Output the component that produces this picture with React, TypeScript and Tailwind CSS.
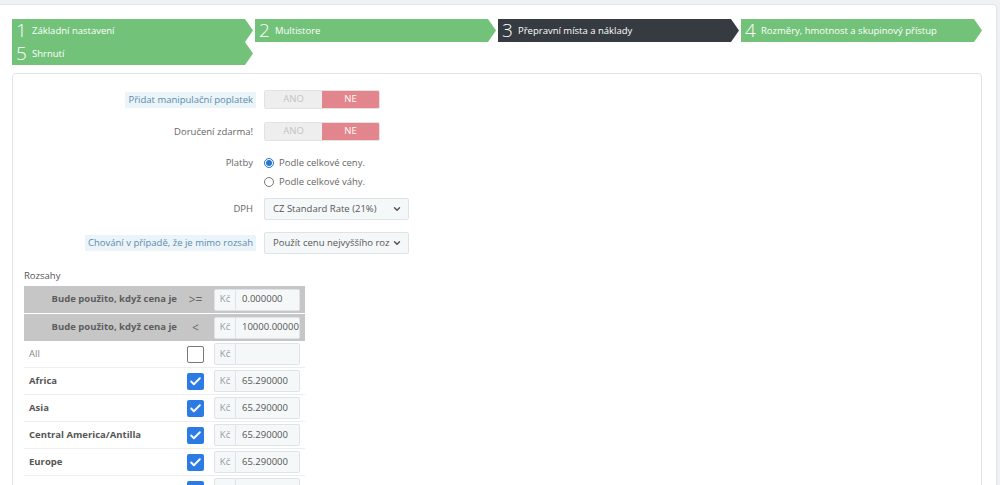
import { Check, ChevronDown } from "lucide-react";

const steps = [
  { n: "1", label: "Základní nastavení", active: false },
  { n: "2", label: "Multistore", active: false },
  { n: "3", label: "Přepravní místa a náklady", active: true },
  { n: "4", label: "Rozměry, hmotnost a skupinový přístup", active: false },
  { n: "5", label: "Shrnutí", active: false },
];

const zones = [
  { name: "All", checked: false, value: "" },
  { name: "Africa", checked: true, value: "65.290000" },
  { name: "Asia", checked: true, value: "65.290000" },
  { name: "Central America/Antilla", checked: true, value: "65.290000" },
  { name: "Europe", checked: true, value: "65.290000" },
  { name: "North America", checked: true, value: "65.290000" },
];

function Step({ n, label, active }: { n: string; label: string; active: boolean }) {
  return (
    <div
      className={`h-[23px] flex items-center pl-[4px] text-white ${active ? "bg-[#363a41]" : "bg-[#72c279]"} [clip-path:polygon(0_0,calc(100%-8px)_0,100%_50%,calc(100%-8px)_100%,0_100%)]`}
    >
      <span className="text-[19px] font-light leading-[23px] w-[16px]">{n}</span>
      <span className="text-[9.5px] leading-[23px]">{label}</span>
    </div>
  );
}

function Switch() {
  return (
    <div className="flex w-[116px] h-[19px] rounded-[2px] overflow-hidden text-[9.5px] border border-[#e2e2e2]">
      <div className="flex-1 bg-[#eeeeee] text-[#c4c4c4] flex items-center justify-center">ANO</div>
      <div className="flex-1 bg-[#e2858c] text-white flex items-center justify-center">NE</div>
    </div>
  );
}

function Select({ text }: { text: string }) {
  return (
    <div className="w-[145px] h-[22px] bg-[#f5f8f9] border border-[#dde3e6] rounded-[2px] flex items-center pl-[8px] pr-[6px] text-[9.5px] text-[#555]">
      <span className="flex-1 whitespace-nowrap overflow-hidden">{text}</span>
      <ChevronDown className="w-[10px] h-[10px] text-[#555] ml-[2px]" strokeWidth={3.5} />
    </div>
  );
}

function PriceInput({ value }: { value: string }) {
  return (
    <div className="flex w-[86px] h-[22px] text-[9.5px]">
      <div className="w-[22px] bg-[#f5f8f9] border border-[#dde3e6] rounded-l-[2px] flex items-center justify-center text-[#999]">Kč</div>
      <div className="flex-1 bg-[#f5f8f9] border border-l-0 border-[#dde3e6] rounded-r-[2px] flex items-center pl-[6px] text-[#555] overflow-hidden whitespace-nowrap">{value}</div>
    </div>
  );
}

function Label({ children, hint }: { children: string; hint?: boolean }) {
  return (
    <div className="w-[243px] flex justify-end shrink-0">
      <span className={`text-[9.5px] leading-[16px] px-[3px] ${hint ? "bg-[#eaf4f9] text-[#5b8cad]" : "text-[#666]"}`}>{children}</span>
    </div>
  );
}

export default function App() {
  return (
    <div className="h-[485px] overflow-hidden bg-[#eff1f2] pt-[4px] pr-[3px] font-['Open_Sans',sans-serif]">
      <div className="bg-white border border-[#e3e6e8] border-l-0 rounded-tr-[4px] h-[520px] overflow-hidden pl-[12px] pt-[14px]">
        {/* Wizard steps */}
        <div className="w-[970px] grid grid-cols-4 gap-x-[2px]">
          {steps.map((s) => (
            <Step key={s.n} {...s} />
          ))}
        </div>

        {/* Panel */}
        <div className="mt-[8px] w-[970px] h-[480px] border border-[#dfe3e6] rounded-[4px] pt-[16px]">
          <div className="flex items-center gap-[8px]">
            <Label hint>Přidat manipulační poplatek</Label>
            <Switch />
          </div>
          <div className="flex items-center gap-[8px] mt-[13px]">
            <Label>Doručení zdarma!</Label>
            <Switch />
          </div>
          <div className="flex gap-[8px] mt-[14px]">
            <Label>Platby</Label>
            <div className="flex flex-col gap-[3px] text-[9.5px] text-[#666]">
              <div className="flex items-center gap-[5px] h-[16px]">
                <span className="w-[10px] h-[10px] rounded-full border border-[#2577c9] flex items-center justify-center">
                  <span className="w-[6px] h-[6px] rounded-full bg-[#2577c9]" />
                </span>
                Podle celkové ceny.
              </div>
              <div className="flex items-center gap-[5px] h-[16px]">
                <span className="w-[10px] h-[10px] rounded-full border border-[#777]" />
                Podle celkové váhy.
              </div>
            </div>
          </div>
          <div className="flex items-center gap-[8px] mt-[8px]">
            <Label>DPH</Label>
            <Select text="CZ Standard Rate (21%)" />
          </div>
          <div className="flex items-center gap-[8px] mt-[12px]">
            <Label hint>Chování v případě, že je mimo rozsah</Label>
            <Select text="Použít cenu nejvyššího rozsahu" />
          </div>

          {/* Ranges */}
          <div className="ml-[11px] mt-[15px]">
            <div className="text-[9.5px] text-[#555] leading-[14px]">Rozsahy</div>
            <div className="w-[281px] mt-[3px]">
              {[">=", "<"].map((op, i) => (
                <div key={op} className={`h-[27px] bg-[#c6c6c6] flex items-center ${i === 0 ? "" : "mt-[1px]"}`}>
                  <div className="w-[153px] text-right text-[9.5px] font-bold text-[#5d5d5d]">Bude použito, když cena je</div>
                  <div className="w-[37px] text-center text-[12px] text-[#666]">{op}</div>
                  <PriceInput value={i === 0 ? "0.000000" : "10000.000000"} />
                </div>
              ))}
              {zones.map((z) => (
                <div key={z.name} className="h-[27px] flex items-center border-b border-[#eeeeee]">
                  <div className={`w-[163px] pl-[5px] text-[9.5px] ${z.checked ? "font-bold text-[#555]" : "text-[#888]"}`}>{z.name}</div>
                  <div className="w-[27px] flex">
                    {z.checked ? (
                      <span className="w-[17px] h-[17px] rounded-[2px] bg-[#2c7be5] flex items-center justify-center">
                        <Check className="w-[13px] h-[13px] text-white" strokeWidth={3.5} />
                      </span>
                    ) : (
                      <span className="w-[17px] h-[17px] rounded-[2px] border border-[#777] bg-white" />
                    )}
                  </div>
                  <PriceInput value={z.value} />
                </div>
              ))}
            </div>
          </div>
        </div>
      </div>
    </div>
  );
}
